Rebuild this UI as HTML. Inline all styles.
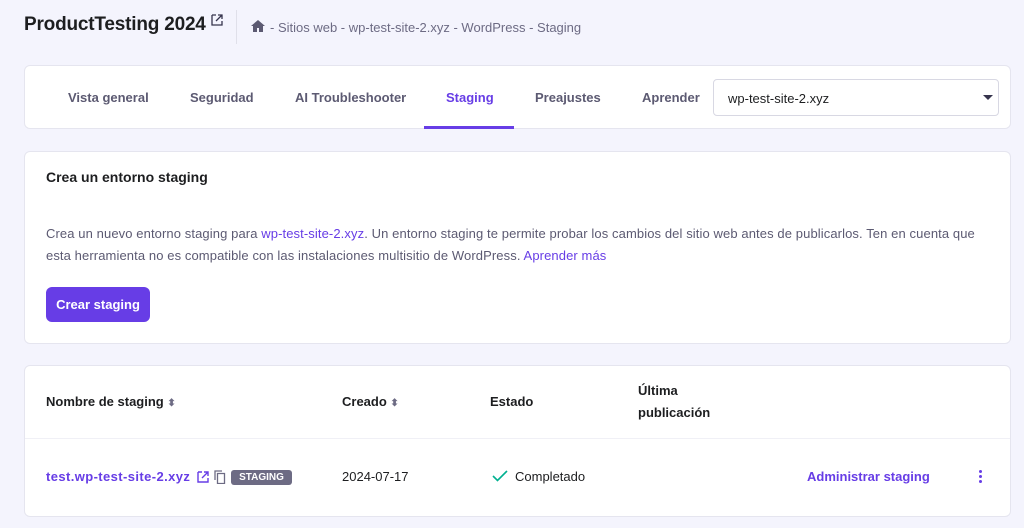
<!DOCTYPE html>
<html><head><meta charset="utf-8"><style>
*{box-sizing:border-box;margin:0;padding:0}
body{width:1024px;height:528px;background:#f4f4fd;font-family:"Liberation Sans",sans-serif;color:#2f1c6a;position:relative;overflow:hidden}
.abs{position:absolute}
.card{position:absolute;left:24px;right:13px;background:#fff;border:1px solid #e5e5ef;border-radius:6px}
.tab{position:absolute;top:24px;font-size:13px;font-weight:bold;color:#5c5a72}
.p{color:#673de6}
</style></head><body>
<div class="abs" style="left:24px;top:14px;font-size:19px;font-weight:bold;color:#1d1e20;letter-spacing:-0.2px">ProductTesting 2024</div>
<svg class="abs" style="left:211px;top:14px" width="12" height="12" viewBox="0 0 12 12"><path d="M1 1h4M1 1v10h10V7M7 1h4v4M11 1L5 7" stroke="#36344d" stroke-width="1.3" fill="none"/></svg>
<div class="abs" style="left:236px;top:10px;width:1px;height:34px;background:#e0e0ea"></div>
<svg class="abs" style="left:251px;top:20px" width="14" height="12" viewBox="0 0 14 12"><path d="M7 0L0 6h2v6h4V8h2v4h4V6h2z" fill="#5c5a72"/></svg>
<div class="abs" style="left:270px;top:20px;font-size:13px;color:#6d6b84">- Sitios web - wp-test-site-2.xyz - WordPress - Staging</div>

<div class="card" style="top:65px;height:64px">
<div class="tab" style="left:43px">Vista general</div>
<div class="tab" style="left:165px">Seguridad</div>
<div class="tab" style="left:270px">AI Troubleshooter</div>
<div class="tab p" style="left:421px">Staging</div>
<div class="abs" style="left:399px;top:60px;width:90px;height:3px;background:#673de6"></div>
<div class="tab" style="left:510px">Preajustes</div>
<div class="tab" style="left:617px">Aprender</div>
<div class="abs" style="left:688px;top:13px;width:286px;height:37px;border:1px solid #d8d8e3;border-radius:4px;font-size:13px;color:#1d1e20;padding:11px 14px">wp-test-site-2.xyz</div>
<div class="abs" style="left:958px;top:29px;border-left:5px solid transparent;border-right:5px solid transparent;border-top:5px solid #36344d"></div>
</div>

<div class="card" style="top:151px;height:193px">
<div class="abs" style="left:21px;top:17px;font-size:14px;font-weight:bold;color:#1d1e20">Crea un entorno staging</div>
<div class="abs" style="left:21px;top:71px;width:950px;font-size:13px;line-height:22px;color:#5c5a72;letter-spacing:0.1px">Crea un nuevo entorno staging para <span class="p">wp-test-site-2.xyz</span>. Un entorno staging te permite probar los cambios del sitio web antes de publicarlos. Ten en cuenta que esta herramienta no es compatible con las instalaciones multisitio de WordPress. <span class="p">Aprender más</span></div>
<div class="abs" style="left:21px;top:135px;width:104px;height:35px;background:#673de6;border-radius:6px;color:#fff;font-size:13px;font-weight:bold;text-align:center;line-height:35px">Crear staging</div>
</div>

<div class="card" style="top:365px;height:152px">
<div class="abs" style="left:0;right:0;top:72px;height:1px;background:#f0f0f6"></div>
<div class="abs" style="left:21px;top:28px;font-size:13px;font-weight:bold;color:#1d1e20">Nombre de staging <span style="color:#6d6b84;font-size:10px">⬍</span></div>
<div class="abs" style="left:317px;top:28px;font-size:13px;font-weight:bold;color:#1d1e20">Creado <span style="color:#6d6b84;font-size:10px">⬍</span></div>
<div class="abs" style="left:465px;top:28px;font-size:13px;font-weight:bold;color:#1d1e20">Estado</div>
<div class="abs" style="left:613px;top:14px;font-size:13px;font-weight:bold;color:#1d1e20;line-height:22px">Última<br>publicación</div>
<div class="abs p" style="left:21px;top:103px;font-size:13px;font-weight:bold;letter-spacing:0.4px">test.wp-test-site-2.xyz</div>
<svg class="abs" style="left:172px;top:105px" width="12" height="12" viewBox="0 0 12 12"><path d="M1 1h4M1 1v10h10V7M7 1h4v4M11 1L5 7" stroke="#673de6" stroke-width="1.4" fill="none"/></svg>
<svg class="abs" style="left:189px;top:104px" width="12" height="14" viewBox="0 0 12 14"><path d="M1 10V1h7M3.5 3.5h7v10h-7z" stroke="#6d6b84" stroke-width="1.3" fill="none"/></svg>
<div class="abs" style="left:206px;top:104px;width:61px;height:15px;background:#6d6b84;border-radius:3px;color:#fff;font-size:10px;font-weight:bold;text-align:center;line-height:15px">STAGING</div>
<div class="abs" style="left:317px;top:103px;font-size:13px;color:#1d1e20">2024-07-17</div>
<svg class="abs" style="left:467px;top:104px" width="16" height="12" viewBox="0 0 16 12"><path d="M1 6l4.5 4.5L15 1" stroke="#00b090" stroke-width="1.6" fill="none"/></svg>
<div class="abs" style="left:490px;top:103px;font-size:13px;color:#1d1e20">Completado</div>
<div class="abs p" style="left:782px;top:103px;font-size:13px;font-weight:bold">Administrar staging</div>
<div class="abs" style="left:954px;top:104px;width:3px;height:3px;border-radius:50%;background:#673de6;box-shadow:0 5px 0 #673de6,0 10px 0 #673de6"></div>
</div>
</body></html>
